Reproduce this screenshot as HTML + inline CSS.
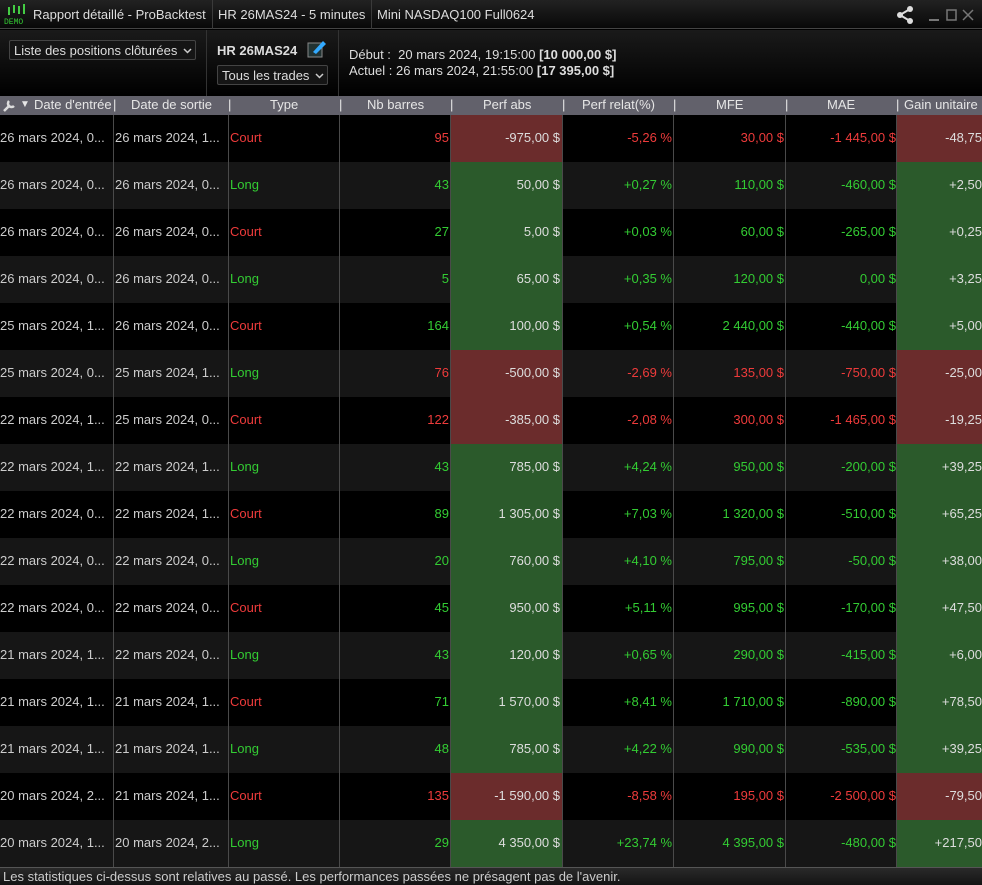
<!DOCTYPE html>
<html><head><meta charset="utf-8"><style>
*{margin:0;padding:0;box-sizing:border-box}
body{width:982px;height:885px;background:#000;font-family:"Liberation Sans",sans-serif;font-size:13px;color:#ccc;overflow:hidden;position:relative}
.title{position:absolute;left:0;top:0;width:982px;height:29px;background:linear-gradient(#222,#080808);border-bottom:1px solid #444}
.title span{position:absolute;top:7px;color:#ddd;font-size:13px}
.sep{position:absolute;top:0;width:1px;height:29px;background:#3a3a3a}
.panel{position:absolute;left:0;top:30px;width:982px;height:66px;background:linear-gradient(#1a1a1a,#000)}
.btn{position:absolute;border:1px solid #444;background:#151515;border-radius:2px;color:#ddd;font-size:13px;padding:2px 4px;white-space:nowrap;overflow:hidden}
.btn svg{position:absolute;right:3px;top:7px}
.hdr{position:absolute;left:0;top:96px;width:982px;height:19px;background:#62616b}
.hdr span{position:absolute;top:1px;color:#e6e6e6;font-size:13px}
.row{position:absolute;left:0;width:982px;height:47px}
.c{position:absolute;top:0;height:47px;line-height:45px;white-space:nowrap;overflow:hidden}
.vl{position:absolute;top:115px;height:752px;width:1px;background:#4a4a4a}
.r{color:#ee3b3b}.g{color:#33cc33}
.foot{position:absolute;left:0;top:867px;width:982px;height:18px;background:linear-gradient(#2a2a2a,#141414);border-top:1px solid #555;color:#ccc;font-size:13px;padding-left:3px;line-height:17px}
</style></head><body>
<div class="title">
<div style="position:absolute;left:3px;top:4px;width:26px;height:22px">
<svg width="26" height="22"><g fill="#4c4"><rect x="5" y="3" width="2" height="8"/><rect x="10" y="1" width="2" height="8"/><rect x="15" y="2" width="2" height="8"/><rect x="20" y="0" width="2" height="10"/></g><text x="1" y="20" fill="#3c3" font-size="8" font-family="Liberation Mono">DEMO</text></svg></div>
<span style="left:33px">Rapport détaillé - ProBacktest</span>
<div class="sep" style="left:212px"></div>
<span style="left:218px">HR 26MAS24 - 5 minutes</span>
<div class="sep" style="left:371px"></div>
<span style="left:377px">Mini NASDAQ100 Full0624</span>
<svg style="position:absolute;left:895px;top:5px" width="87" height="20"><g fill="#ddd"><circle cx="15" cy="4" r="3"/><circle cx="5" cy="10" r="3"/><circle cx="15" cy="16" r="3"/></g><path d="M15 4L5 10L15 16" stroke="#ddd" stroke-width="2" fill="none"/><rect x="34" y="14" width="10" height="2" fill="#777"/><rect x="52" y="5" width="9" height="10" fill="none" stroke="#777" stroke-width="1.5"/><path d="M68 5L78 15M78 5L68 15" stroke="#777" stroke-width="1.5"/></svg>
</div>
<div class="panel">
<div class="btn" style="left:9px;top:10px;width:187px;height:20px">Liste des positions clôturées<svg width="9" height="6"><path d="M1 1L4.5 4.5L8 1" stroke="#ccc" stroke-width="1.5" fill="none"/></svg></div>
<div style="position:absolute;left:206px;top:0;width:1px;height:66px;background:#333"></div>
<div style="position:absolute;left:217px;top:13px;font-weight:bold;color:#ddd">HR 26MAS24</div>
<svg style="position:absolute;left:307px;top:9px" width="20" height="20"><rect x="1" y="4" width="14" height="14" fill="#233" stroke="#888"/><path d="M6 13L16 2L19 5L9 15Z" fill="#3af"/></svg>
<div class="btn" style="left:217px;top:35px;width:111px;height:20px">Tous les trades<svg width="9" height="6"><path d="M1 1L4.5 4.5L8 1" stroke="#ccc" stroke-width="1.5" fill="none"/></svg></div>
<div style="position:absolute;left:338px;top:0;width:1px;height:66px;background:#333"></div>
<div style="position:absolute;left:349px;top:17px;color:#ddd;line-height:16px">Début :&nbsp; 20 mars 2024, 19:15:00 <b>[10 000,00 $]</b><br>Actuel : 26 mars 2024, 21:55:00 <b>[17 395,00 $]</b></div>
</div>
<div class="hdr">
<svg style="position:absolute;left:2px;top:2px" width="15" height="15"><path d="M2 13L8 7M7 3a3 3 0 1 0 5 5" stroke="#ddd" stroke-width="2.5" fill="none"/></svg>
<span style="left:20px;font-size:10px;top:3px">▼</span>
<span style="left:34px">Date d'entrée</span><span style="left:113px">|</span>
<span style="left:131px">Date de sortie</span><span style="left:228px">|</span>
<span style="left:270px">Type</span><span style="left:339px">|</span>
<span style="left:367px">Nb barres</span><span style="left:450px">|</span>
<span style="left:483px">Perf abs</span><span style="left:562px">|</span>
<span style="left:582px">Perf relat(%)</span><span style="left:673px">|</span>
<span style="left:716px">MFE</span><span style="left:785px">|</span>
<span style="left:827px">MAE</span><span style="left:896px">|</span>
<span style="left:904px">Gain unitaire</span>
</div>
<div id="rows"></div>
<script>
var d=[
["26 mars 2024, 0...","26 mars 2024, 1...",0,"95","-975,00 $","-5,26 %","30,00 $","-1 445,00 $","-48,75",0,0],
["26 mars 2024, 0...","26 mars 2024, 0...",1,"43","50,00 $","+0,27 %","110,00 $","-460,00 $","+2,50",1,1],
["26 mars 2024, 0...","26 mars 2024, 0...",0,"27","5,00 $","+0,03 %","60,00 $","-265,00 $","+0,25",1,1],
["26 mars 2024, 0...","26 mars 2024, 0...",1,"5","65,00 $","+0,35 %","120,00 $","0,00 $","+3,25",1,1],
["25 mars 2024, 1...","26 mars 2024, 0...",0,"164","100,00 $","+0,54 %","2 440,00 $","-440,00 $","+5,00",1,1],
["25 mars 2024, 0...","25 mars 2024, 1...",1,"76","-500,00 $","-2,69 %","135,00 $","-750,00 $","-25,00",0,0],
["22 mars 2024, 1...","25 mars 2024, 0...",0,"122","-385,00 $","-2,08 %","300,00 $","-1 465,00 $","-19,25",0,0],
["22 mars 2024, 1...","22 mars 2024, 1...",1,"43","785,00 $","+4,24 %","950,00 $","-200,00 $","+39,25",1,1],
["22 mars 2024, 0...","22 mars 2024, 1...",0,"89","1 305,00 $","+7,03 %","1 320,00 $","-510,00 $","+65,25",1,1],
["22 mars 2024, 0...","22 mars 2024, 0...",1,"20","760,00 $","+4,10 %","795,00 $","-50,00 $","+38,00",1,1],
["22 mars 2024, 0...","22 mars 2024, 0...",0,"45","950,00 $","+5,11 %","995,00 $","-170,00 $","+47,50",1,1],
["21 mars 2024, 1...","22 mars 2024, 0...",1,"43","120,00 $","+0,65 %","290,00 $","-415,00 $","+6,00",1,1],
["21 mars 2024, 1...","21 mars 2024, 1...",0,"71","1 570,00 $","+8,41 %","1 710,00 $","-890,00 $","+78,50",1,1],
["21 mars 2024, 1...","21 mars 2024, 1...",1,"48","785,00 $","+4,22 %","990,00 $","-535,00 $","+39,25",1,1],
["20 mars 2024, 2...","21 mars 2024, 1...",0,"135","-1 590,00 $","-8,58 %","195,00 $","-2 500,00 $","-79,50",0,0],
["20 mars 2024, 1...","20 mars 2024, 2...",1,"29","4 350,00 $","+23,74 %","4 395,00 $","-480,00 $","+217,50",1,1]];
var h="";
d.forEach(function(r,i){
var top=115+i*47,bg=i%2?"#161616":"#000",cl=r[9]?"g":"r",cell=r[9]?"#2b5a2b":"#6b2c2c";
h+='<div class="row" style="top:'+top+'px;background:'+bg+'">'+
'<div class="c" style="left:0;width:112px">'+r[0]+'</div>'+
'<div class="c" style="left:115px;width:112px">'+r[1]+'</div>'+
'<div class="c '+(r[2]?"g":"r")+'" style="left:230px">'+(r[2]?"Long":"Court")+'</div>'+
'<div class="c '+cl+'" style="left:340px;width:109px;text-align:right">'+r[3]+'</div>'+
'<div class="c" style="left:451px;width:111px;background:'+cell+';text-align:right;padding-right:2px;color:#ddd">'+r[4]+'</div>'+
'<div class="c '+(r[5][0]=="-"?"r":"g")+'" style="left:563px;width:109px;text-align:right">'+r[5]+'</div>'+
'<div class="c '+cl+'" style="left:674px;width:110px;text-align:right">'+r[6]+'</div>'+
'<div class="c '+cl+'" style="left:786px;width:110px;text-align:right">'+r[7]+'</div>'+
'<div class="c" style="left:897px;width:85px;background:'+cell+';text-align:right;color:#ddd">'+r[8]+'</div></div>';
});
[113,228,339,450,562,673,785,896].forEach(function(x){h+='<div class="vl" style="left:'+x+'px"></div>'});
document.getElementById("rows").innerHTML=h;
</script>
<div class="foot">Les statistiques ci-dessus sont relatives au passé. Les performances passées ne présagent pas de l'avenir.</div>
</body></html>
